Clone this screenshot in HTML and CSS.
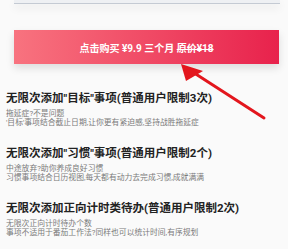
FILE: index.html
```html
<!DOCTYPE html>
<html lang="zh">
<head>
    <meta charset="UTF-8">
    <meta name="viewport" content="width=device-width, initial-scale=1.0">
    <title>会员特权</title>
    <link rel="stylesheet" href="styles.css">
</head>
<body>
    <div class="page">
        <div class="top-card"></div>

        <button class="buy-btn">点击购买 ¥9.9 三个月 <s>原价¥18</s></button>

        <div class="perks">
            <div class="perk">
                <h2>无限次添加"目标"事项(普通用户限制3次)</h2>
                <p>拖延症?不是问题<br>'目标'事项结合截止日期,让你更有紧迫感,坚持战胜拖延症</p>
            </div>
            <div class="perk">
                <h2>无限次添加"习惯"事项(普通用户限制2个)</h2>
                <p>中途放弃?助你养成良好习惯<br>习惯事项结合日历视图,每天都有动力去完成习惯,成就满满</p>
            </div>
            <div class="perk">
                <h2>无限次添加正向计时类待办(普通用户限制2次)</h2>
                <p>无限次正向计时待办个数<br>事项不适用于番茄工作法?同样也可以统计时间,有序规划</p>
            </div>
        </div>

        <!-- pointer arrow over the content -->
        <svg class="arrow" width="288" height="249" viewBox="0 0 288 249">
            <line x1="264" y1="118" x2="188" y2="69" stroke="#e3161d" stroke-width="3" stroke-linecap="round"/>
            <polygon points="181,64 203,71 186,81" fill="#e3161d"/>
        </svg>
    </div>
</body>
</html>
```

FILE: styles.css
```css
body {
    margin: 0;
    background-color: #fafafa;
    font-family: Roboto, "Noto Sans CJK SC", sans-serif;
    color: #222;
}
.page {
    position: relative;
    width: 288px;
    height: 249px;
    overflow: hidden;
}
.top-card {
    height: 3px;
    margin: 0 8px 0 14px;
    background-color: #eef0f3;
    border-bottom: 1px solid #c4cad3;
    box-shadow: 0 4px 8px rgba(0,0,0,0.08);
}
.buy-btn {
    display: block;
    width: 265px;
    height: 34px;
    margin: 26px 0 0 14px;
    padding: 0;
    border: none;
    background: linear-gradient(to right, #f8737f, #e8224c);
    box-shadow: 0 4px 8px rgba(0,0,0,0.12);
    color: #fff;
    font-family: inherit;
    font-size: 10px;
    font-weight: bold;
}
.perks {
    padding: 26px 0 0 6px;
}
.perk {
    margin-bottom: 18px;
}
.perk h2 {
    margin: 0 0 3px;
    font-size: 11.5px;
    line-height: 16px;
    font-weight: bold;
    color: #222;
}
.perk p {
    margin: 0;
    font-size: 7.8px;
    line-height: 9px;
    color: #7a7a7a;
}
.arrow {
    position: absolute;
    left: 0;
    top: 0;
}
```
